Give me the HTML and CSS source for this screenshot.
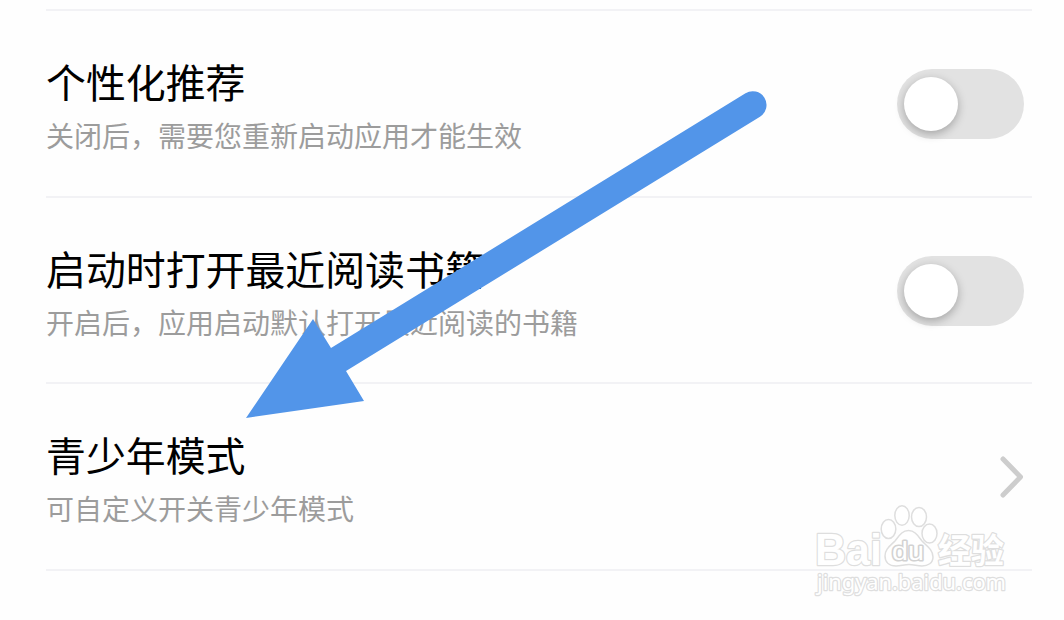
FILE: index.html
```html
<!DOCTYPE html>
<html lang="zh-CN">
<head>
<meta charset="utf-8">
<title>设置</title>
<link rel="stylesheet" href="styles.css">
</head>
<body>
<main class="settings">
  <section class="row">
    <div class="label">
      <div class="title">个性化推荐</div>
      <div class="desc">关闭后，需要您重新启动应用才能生效</div>
    </div>
    <div class="switch"><div class="knob"></div></div>
  </section>
  <section class="row">
    <div class="label">
      <div class="title">启动时打开最近阅读书籍</div>
      <div class="desc">开启后，应用启动默认打开最近阅读的书籍</div>
    </div>
    <div class="switch"><div class="knob"></div></div>
  </section>
  <section class="row">
    <div class="label">
      <div class="title">青少年模式</div>
      <div class="desc">可自定义开关青少年模式</div>
    </div>
    <svg class="chevron" width="26" height="44" viewBox="0 0 26 44"><path d="M5 4 L22.500 22 L5 40"/></svg>
  </section>
  <div class="end"></div>
</main>
<svg class="overlay" width="1064" height="620" viewBox="0 0 1064 620">
  <path class="arrow" d="M246 418 L313 319 L331 348 L745.5 93.3 A13.7 13.7 0 0 1 760 116.7 L346 371 L364 401 Z"/>
  <g class="mark">
    <text class="latin" x="815" y="564.5" font-size="45" textLength="67" lengthAdjust="spacingAndGlyphs">Bai</text>
    <ellipse cx="888.5" cy="529" rx="7.3" ry="9.5"/>
    <ellipse cx="902" cy="515.5" rx="7.2" ry="9.7"/>
    <ellipse cx="919" cy="517" rx="7.5" ry="9.5"/>
    <ellipse cx="929.5" cy="533.5" rx="7.5" ry="9.5"/>
    <path d="M908.5 530.5 C915 530.5 918 536 922 541 C927 546 933 550 933 557 C933 563 928 566 922 566 C917 566 914 564.5 909 564.5 C904 564.5 901 566 896 566 C889 566 885 562 885 556 C885 549 890 546 895 541 C899 536 902 530.5 908.5 530.5 Z"/>
    <text class="latin du" x="892" y="560" font-size="26" textLength="32" lengthAdjust="spacingAndGlyphs">du</text>
    <text class="hanzi" x="938" y="562.5" font-size="34" textLength="66" lengthAdjust="spacingAndGlyphs">经验</text>
    <text class="site" x="817" y="590" font-size="22" textLength="189" lengthAdjust="spacingAndGlyphs">jingyan.baidu.com</text>
  </g>
</svg>
</body>
</html>
```
FILE: styles.css
```css
body {
  margin: 0;
  background: #fefefe;
  font-family: "Noto Sans CJK SC", sans-serif;
  overflow: hidden;
}
.settings {
  padding: 9px 32px 0 46px;
}
.row {
  box-sizing: border-box;
  height: 186.7px;
  border-top: 2px solid #f2f2f5;
  display: flex;
  justify-content: space-between;
  align-items: center;
  padding: 1px 8px 0 0;
}
.end {
  height: 2px;
  background: #f2f2f5;
}
.label {
  white-space: nowrap;
}
.title {
  font-size: 39.9px;
  line-height: 56px;
  color: #000;
}
.desc {
  font-size: 28px;
  line-height: 40px;
  margin-top: 6px;
  color: #9c9c9c;
}
.switch {
  box-sizing: border-box;
  width: 127px;
  height: 70px;
  padding: 8px 7px;
  border-radius: 35px;
  background: #e2e2e2;
}
.knob {
  width: 54px;
  height: 54px;
  border-radius: 50%;
  background: #fff;
  box-shadow: 0 3px 10px rgba(0, 0, 0, .28);
}
.chevron {
  fill: none;
  stroke: #cdcdcd;
  stroke-width: 5;
  stroke-linecap: round;
  stroke-linejoin: round;
}
.overlay {
  position: absolute;
  left: 0;
  top: 0;
}
.arrow {
  fill: #5295e9;
}
.mark {
  fill: #fff;
  stroke: #dedede;
  stroke-width: 1.5;
}
.mark text {
  paint-order: stroke;
  stroke-width: 2.5;
  stroke-linejoin: round;
}
.latin {
  font-family: "Liberation Sans", sans-serif;
  font-weight: 700;
}
.mark .du {
  font-weight: 400;
  stroke: #d2d2d2;
  stroke-width: 3;
}
.hanzi {
  font-family: "Noto Sans CJK SC", sans-serif;
  font-weight: 700;
}
.site {
  font-family: "Noto Sans", sans-serif;
  font-weight: 400;
}
```
